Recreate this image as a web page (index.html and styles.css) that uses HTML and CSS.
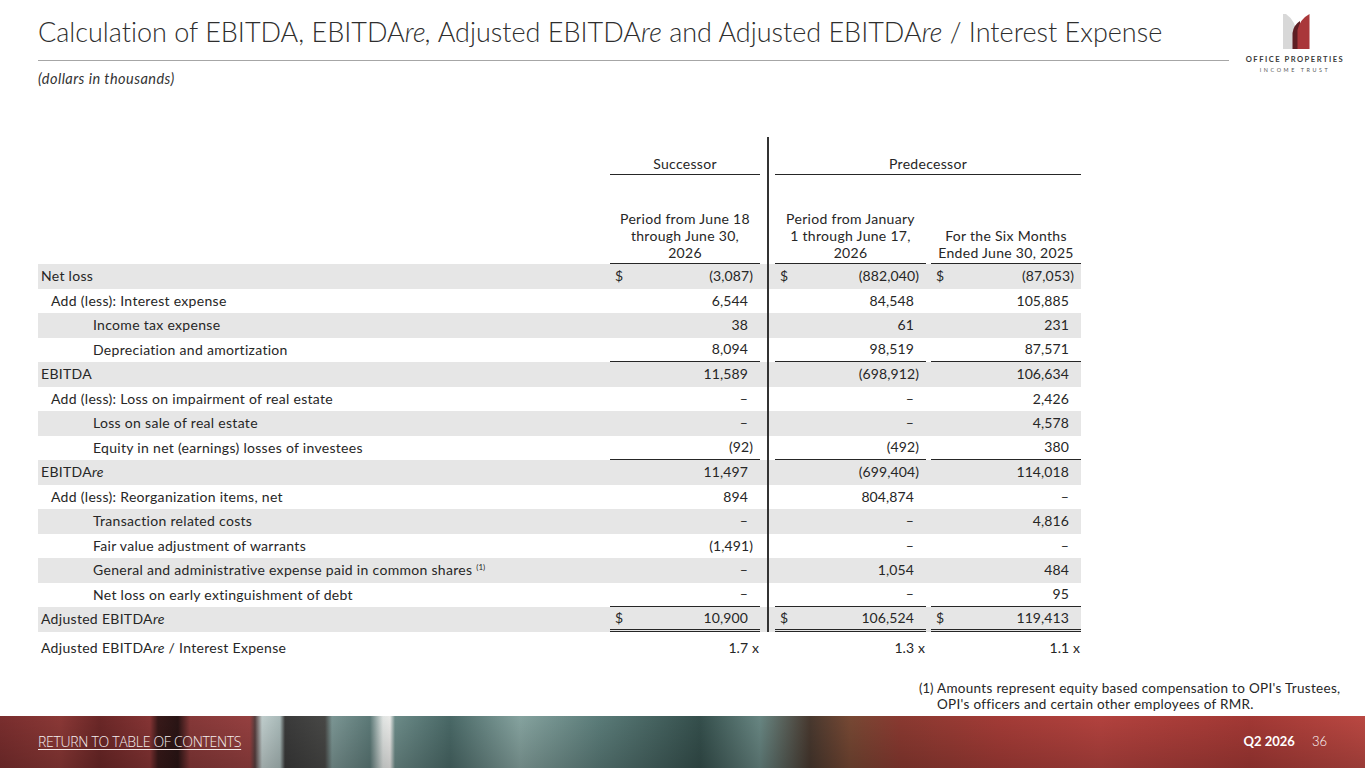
FILE: index.html
```html
<!DOCTYPE html>
<html lang="en">
<head>
<meta charset="utf-8">
<title>Calculation of EBITDA</title>
<link rel="stylesheet" href="styles.css">
</head>
<body>
<div class="page">
  <header class="top">
    <div class="head-main">
      <h1 class="title">Calculation of EBITDA, EBITDA<i>re,</i> Adjusted EBITDA<i>re</i> and Adjusted EBITDA<i>re</i> / Interest Expense</h1>
      <div class="rule"></div>
      <div class="subtitle">(dollars in thousands)</div>
    </div>
    <div class="logo">
      <svg class="logo-mark" width="27" height="35" viewBox="0 0 27 35">
        <path d="M0 0 L3 0 Q13 7 13.5 20 L13.5 35 L0 35 Z" fill="#d8d8d8"/>
        <path d="M9.5 35 L9.5 19 Q10.5 11 17 7 L17 35 Z" fill="#5e1f24"/>
        <path d="M14.5 35 L14.5 16 Q17 5 26.5 0 L26.5 35 Z" fill="#a9373a"/>
      </svg>
      <div class="logo-t1">OFFICE PROPERTIES</div>
      <div class="logo-t2">INCOME TRUST</div>
    </div>
  </header>

  <main class="content">
    <table class="fin">
      <colgroup>
        <col class="c-lbl"><col class="c-v1"><col class="c-gap"><col class="c-v2"><col class="c-gap2"><col class="c-v3">
      </colgroup>
      <thead>
        <tr class="h1">
          <th class="lbl"></th>
          <th class="grp">Successor</th>
          <th class="gap div"></th>
          <th class="grp" colspan="3">Predecessor</th>
        </tr>
        <tr class="h2">
          <th class="lbl"></th>
          <th class="sub">Period from June 18<br>through June 30,<br>2026</th>
          <th class="gap div"></th>
          <th class="sub">Period from January<br>1 through June 17,<br>2026</th>
          <th class="gap2"></th>
          <th class="sub">For the Six Months<br>Ended June 30, 2025</th>
        </tr>
      </thead>
      <tbody>
        <tr class="sh">
          <td class="lbl l0">Net loss</td>
          <td class="v"><span class="cur">$</span>(3,087)</td><td class="gap div"></td>
          <td class="v"><span class="cur">$</span>(882,040)</td><td class="gap2"></td>
          <td class="v"><span class="cur">$</span>(87,053)</td>
        </tr>
        <tr>
          <td class="lbl l1">Add (less): Interest expense</td>
          <td class="v p">6,544</td><td class="gap div"></td>
          <td class="v p">84,548</td><td class="gap2"></td>
          <td class="v p">105,885</td>
        </tr>
        <tr class="sh">
          <td class="lbl l2">Income tax expense</td>
          <td class="v p">38</td><td class="gap div"></td>
          <td class="v p">61</td><td class="gap2"></td>
          <td class="v p">231</td>
        </tr>
        <tr class="ul">
          <td class="lbl l2">Depreciation and amortization</td>
          <td class="v p">8,094</td><td class="gap div"></td>
          <td class="v p">98,519</td><td class="gap2"></td>
          <td class="v p">87,571</td>
        </tr>
        <tr class="sh">
          <td class="lbl l0">EBITDA</td>
          <td class="v p">11,589</td><td class="gap div"></td>
          <td class="v">(698,912)</td><td class="gap2"></td>
          <td class="v p">106,634</td>
        </tr>
        <tr>
          <td class="lbl l1">Add (less): Loss on impairment of real estate</td>
          <td class="v p">–</td><td class="gap div"></td>
          <td class="v p">–</td><td class="gap2"></td>
          <td class="v p">2,426</td>
        </tr>
        <tr class="sh">
          <td class="lbl l2">Loss on sale of real estate</td>
          <td class="v p">–</td><td class="gap div"></td>
          <td class="v p">–</td><td class="gap2"></td>
          <td class="v p">4,578</td>
        </tr>
        <tr class="ul">
          <td class="lbl l2">Equity in net (earnings) losses of investees</td>
          <td class="v">(92)</td><td class="gap div"></td>
          <td class="v">(492)</td><td class="gap2"></td>
          <td class="v p">380</td>
        </tr>
        <tr class="sh">
          <td class="lbl l0">EBITDA<i>re</i></td>
          <td class="v p">11,497</td><td class="gap div"></td>
          <td class="v">(699,404)</td><td class="gap2"></td>
          <td class="v p">114,018</td>
        </tr>
        <tr>
          <td class="lbl l1">Add (less): Reorganization items, net</td>
          <td class="v p">894</td><td class="gap div"></td>
          <td class="v p">804,874</td><td class="gap2"></td>
          <td class="v p">–</td>
        </tr>
        <tr class="sh">
          <td class="lbl l2">Transaction related costs</td>
          <td class="v p">–</td><td class="gap div"></td>
          <td class="v p">–</td><td class="gap2"></td>
          <td class="v p">4,816</td>
        </tr>
        <tr>
          <td class="lbl l2">Fair value adjustment of warrants</td>
          <td class="v">(1,491)</td><td class="gap div"></td>
          <td class="v p">–</td><td class="gap2"></td>
          <td class="v p">–</td>
        </tr>
        <tr class="sh">
          <td class="lbl l2">General and administrative expense paid in common shares <sup>(1)</sup></td>
          <td class="v p">–</td><td class="gap div"></td>
          <td class="v p">1,054</td><td class="gap2"></td>
          <td class="v p">484</td>
        </tr>
        <tr class="ul">
          <td class="lbl l2">Net loss on early extinguishment of debt</td>
          <td class="v p">–</td><td class="gap div"></td>
          <td class="v p">–</td><td class="gap2"></td>
          <td class="v p">95</td>
        </tr>
        <tr class="sh dbl">
          <td class="lbl l0">Adjusted EBITDA<i>re</i></td>
          <td class="v p"><span class="cur">$</span>10,900</td><td class="gap div"></td>
          <td class="v p"><span class="cur">$</span>106,524</td><td class="gap2"></td>
          <td class="v p"><span class="cur">$</span>119,413</td>
        </tr>
        <tr class="ratio">
          <td class="lbl l0">Adjusted EBITDA<i>re</i> / Interest Expense</td>
          <td class="v">1.7 x</td><td class="gap"></td>
          <td class="v">1.3 x</td><td class="gap2"></td>
          <td class="v">1.1 x</td>
        </tr>
      </tbody>
    </table>

    <div class="footnote">
      <span class="fn-num">(1)</span>
      <span class="fn-text">Amounts represent equity based compensation to OPI's Trustees,<br>OPI's officers and certain other employees of RMR.</span>
    </div>
  </main>

  <footer class="foot">
    <a class="toc" href="#">RETURN TO TABLE OF CONTENTS</a>
    <div class="pg"><b>Q2 2026</b><span class="pnum">36</span></div>
  </footer>
</div>
</body>
</html>
```

FILE: styles.css
```css
* { box-sizing: border-box; }
html, body { margin: 0; padding: 0; }
body {
  width: 1365px;
  height: 768px;
  overflow: hidden;
  background: #fff;
  font-family: "Lato", "Noto Sans", sans-serif;
  font-variant-ligatures: none;
  color: #262626;
}
.page {
  width: 1365px;
  height: 768px;
  display: flex;
  flex-direction: column;
}

/* header */
.top {
  display: flex;
  align-items: flex-start;
  padding: 0 20px 0 38px;
}
.head-main { flex: 1; padding-top: 15px; }
.title {
  margin: 0;
  font-size: 27px;
  line-height: 33px;
  font-weight: 300;
  color: #2e2e2e;
  white-space: nowrap;
}
.title i { font-style: italic; }
.rule { margin-top: 12px; height: 1px; background: #a6a6a6; }
.subtitle {
  margin-top: 9px;
  font-size: 14.5px;
  letter-spacing: 0.45px;
  line-height: 18px;
  font-style: italic;
  color: #333;
}
.logo {
  width: 100px;
  margin-left: 16px;
  padding-top: 14px;
  display: flex;
  flex-direction: column;
  align-items: center;
}
.logo-mark { display: block; margin-left: 2px; }
.logo-t1 {
  margin-top: 6px;
  font-size: 7.6px;
  font-weight: 700;
  letter-spacing: 1.5px;
  color: #3a3a3a;
  white-space: nowrap;
  line-height: 9px;
}
.logo-t2 {
  margin-top: 3px;
  font-size: 5.4px;
  letter-spacing: 2.6px;
  color: #555;
  white-space: nowrap;
  line-height: 7px;
}

/* table */
.content { flex: 1; padding-left: 38px; }
.fin {
  margin-top: 49px;
  border-collapse: separate;
  border-spacing: 0;
  table-layout: fixed;
  width: 1043px;
  font-size: 14px;
  letter-spacing: 0.3px;
}
.c-lbl { width: 572px; }
.c-v1 { width: 150px; }
.c-gap { width: 15px; }
.c-v2 { width: 151px; }
.c-gap2 { width: 5px; }
.c-v3 { width: 150px; }

.fin th { font-weight: 400; padding: 0; }
.h1 th { height: 38px; vertical-align: bottom; line-height: 18px; padding-bottom: 1px; }
.h1 .grp { border-bottom: 1.5px solid #262626; text-align: center; }
.h2 th { height: 89px; vertical-align: bottom; line-height: 17px; padding-bottom: 2px; }
.h2 .sub { text-align: center; border-bottom: 1.5px solid #262626; }

.div {
  background-image: linear-gradient(#333, #333);
  background-size: 2px 100%;
  background-position: 7px 0;
  background-repeat: no-repeat;
}

.fin td {
  height: 24.5px;
  padding: 0;
  line-height: 18px;
  vertical-align: middle;
  white-space: nowrap;
}
.fin tbody tr.sh { background: #e6e6e6; }
.lbl.l0 { padding-left: 3px; }
.lbl.l1 { padding-left: 13px; }
.lbl.l2 { padding-left: 55px; }
.lbl sup { font-size: 8px; vertical-align: 5px; line-height: 0; letter-spacing: 0; }

.v { text-align: right; padding-right: 7px !important; padding-left: 5px !important; letter-spacing: 0.1px; }
.v.p { padding-right: 12px !important; }
.cur { float: left; }

.ul .v { border-bottom: 1px solid #262626; }
.dbl .v { border-bottom: 3.5px double #262626; }
.ratio td { height: 28px; padding-top: 5px; }
.ratio .v { padding-right: 1px !important; }

/* footnote */
.footnote {
  margin-top: 20px;
  margin-left: 881px;
  display: flex;
  font-size: 13.5px;
  letter-spacing: 0.3px;
  line-height: 16px;
  color: #262626;
}
.fn-num { width: 18px; flex: none; letter-spacing: 0; font-size: 13px; white-space: nowrap; }
.fn-text { flex: none; }

/* footer */
.foot {
  height: 52px;
  flex: none;
  display: flex;
  align-items: center;
  justify-content: space-between;
  padding: 0 38px 2px 38px;
  color: #fff;
  background:
    linear-gradient(180deg, rgba(0,0,0,0.03), rgba(0,0,0,0.2)),
    linear-gradient(90deg,
      #7d2f2f 0, #8f3a38 60px, #6e2828 100px, #8a3636 150px, #3a1a1a 158px, #2b1515 178px, #8a3a3a 190px, #9a4242 250px,
      #5a4040 255px, #c5d3d2 262px, #aebfbe 280px, #3c3c3c 285px, #4a4a48 325px, #7f9a98 332px, #5f7d7b 370px,
      #e8ecea 383px, #f2f2f0 390px, #6f8f8c 395px, #4b6b69 450px, #8aa8a4 520px, #5d7f7c 600px, #36514e 700px,
      #6b8a86 760px, #4a3a30 810px, #7a4a35 850px, #8e3b32 900px, #a83d38 1000px, #b84440 1100px, #a73a36 1250px, #c04a44 1365px);
}
.toc {
  color: #f4eeee;
  font-family: "Open Sans", sans-serif;
  font-weight: 300;
  font-size: 14px;
  letter-spacing: -0.3px;
  text-decoration: underline;
  text-underline-offset: 2px;
}
.pg { font-size: 13px; display: flex; align-items: center; }
.pg b { font-weight: 700; }
.pnum { margin-left: 17px; font-weight: 300; }
```
